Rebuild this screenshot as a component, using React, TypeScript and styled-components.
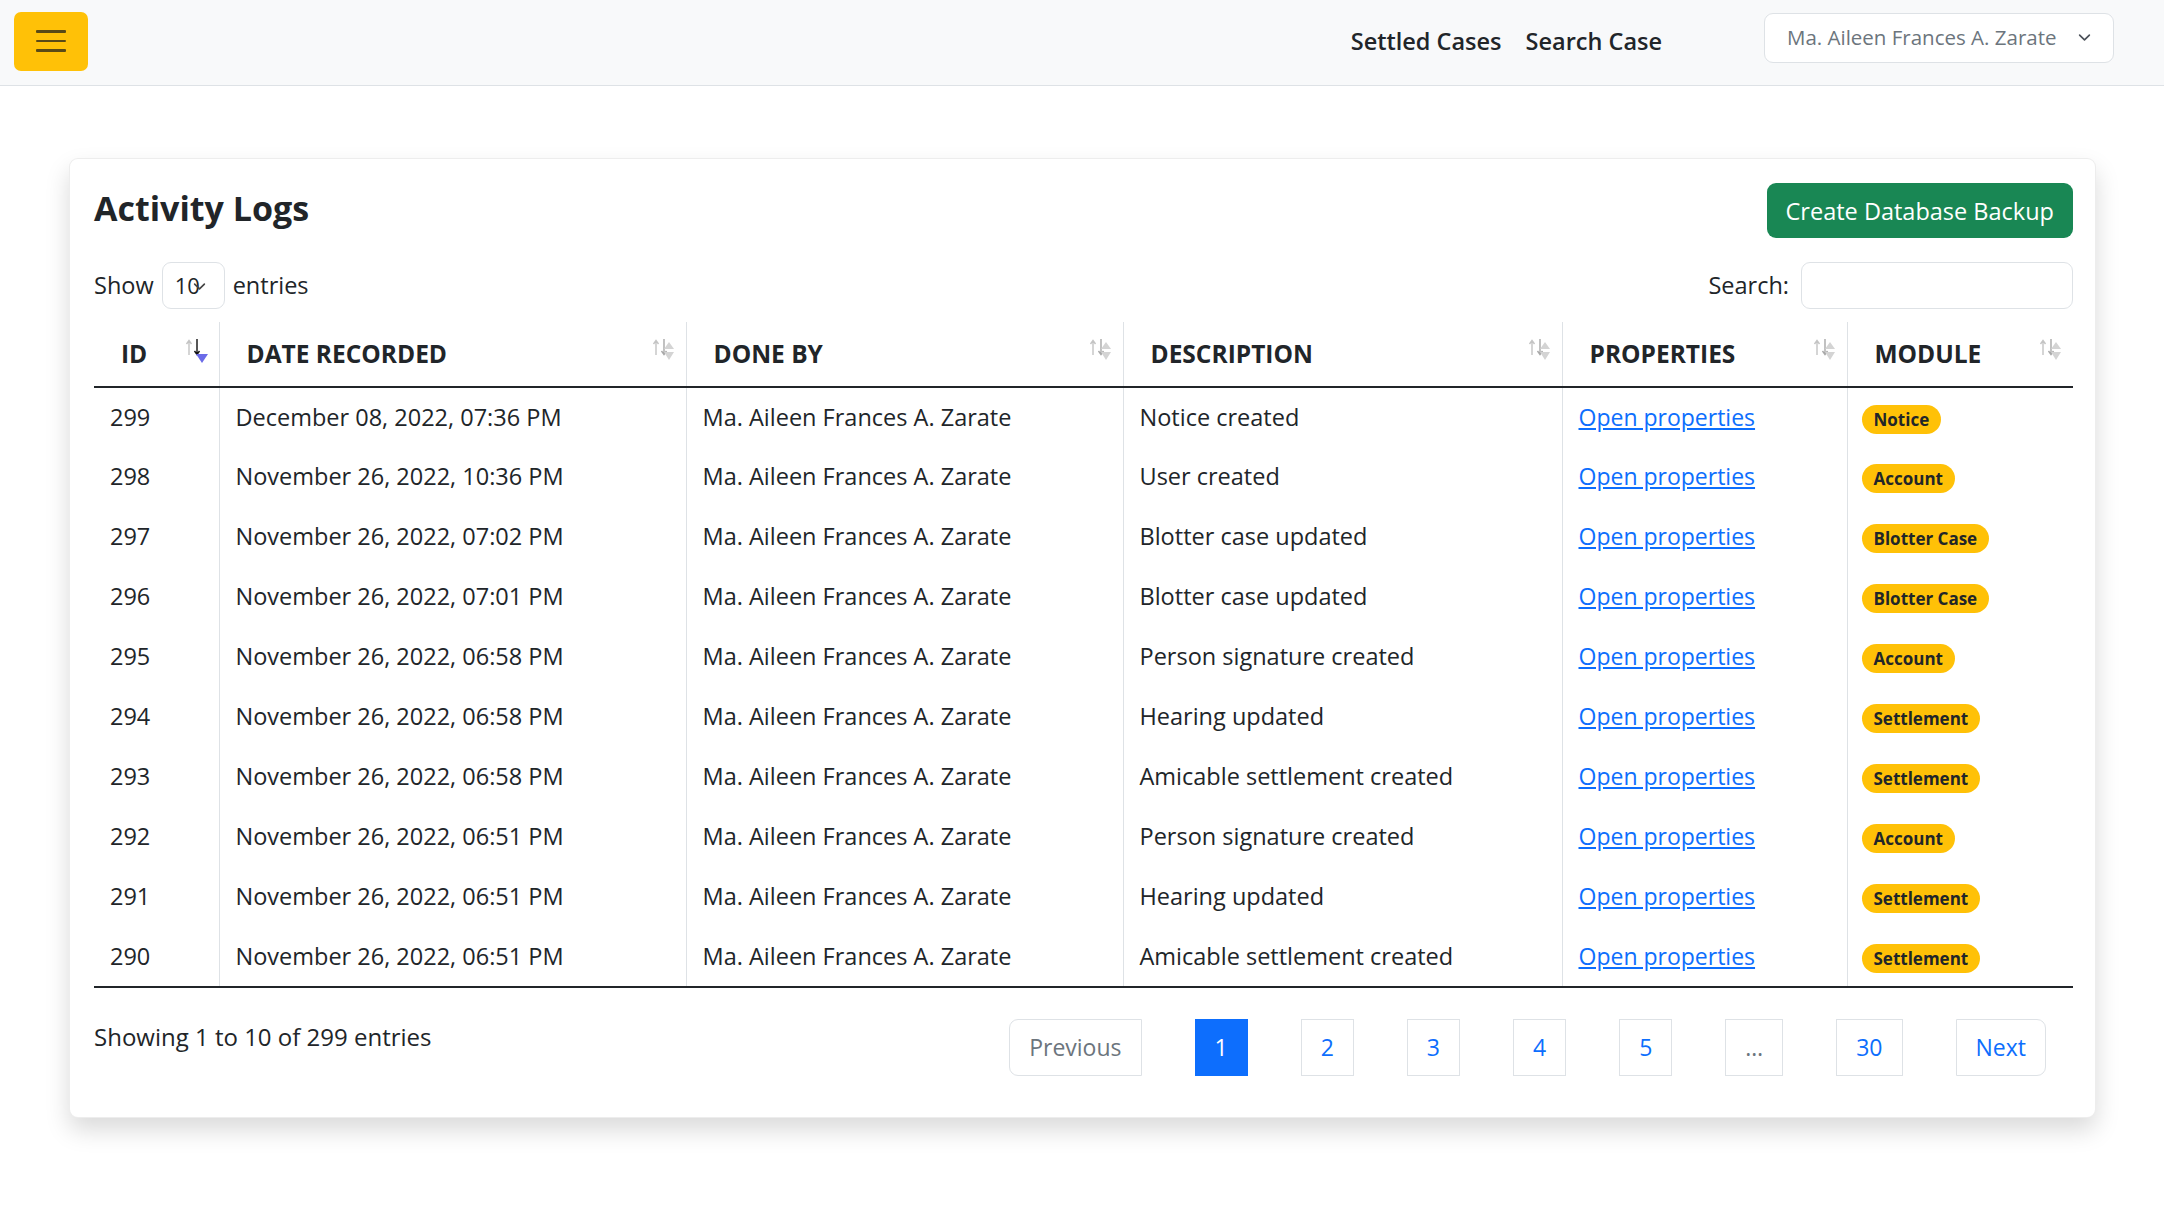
import React from "react";
import styled, { createGlobalStyle } from "styled-components";

const GlobalStyle = createGlobalStyle`
  * { box-sizing: border-box; }
  html, body { margin: 0; padding: 0; background: #ffffff; }
  body {
    font-family: "Open Sans", "Noto Sans", "Liberation Sans", sans-serif;
    color: #212529;
    font-size: 24px;
    line-height: 1.5;
  }
`;

const Navbar = styled.nav`
  display: flex;
  align-items: center;
  height: 86px;
  padding: 0 50px 0 14px;
  background: #f8f9fa;
  border-bottom: 1px solid #dee2e6;
`;

const Toggler = styled.button`
  width: 74px;
  height: 59px;
  margin-top: -3px;
  border: none;
  border-radius: 7px;
  background: #ffc107;
  display: flex;
  flex-direction: column;
  align-items: center;
  justify-content: center;
  gap: 7px;
  padding: 0;
`;

const ToggleBar = styled.span`
  display: block;
  width: 30px;
  height: 2.5px;
  border-radius: 1px;
  background: #5a4a16;
`;

const NavLinks = styled.div`
  margin-left: auto;
  display: flex;
  gap: 24px;
  margin-top: -2px;
`;

const NavLink = styled.a`
  font-size: 23.5px;
  font-weight: 600;
  color: #212529;
  text-decoration: none;
`;

const UserSelect = styled.div`
  margin-left: 102px;
  width: 350px;
  height: 50px;
  margin-top: -10px;
  display: flex;
  align-items: center;
  justify-content: space-between;
  padding: 0 22px 0 22px;
  background: #ffffff;
  border: 1px solid #dee2e6;
  border-radius: 9px;
  color: #6c757d;
  font-size: 20.5px;
`;

const Main = styled.main`
  padding: 72px 68px 40px 69px;
`;

const Card = styled.section`
  background: #ffffff;
  border: 1px solid rgba(0, 0, 0, 0.07);
  border-radius: 9px;
  box-shadow: 0 12px 24px rgba(0, 0, 0, 0.15);
  padding: 24px 22px 41px 24px;
`;

const CardHeader = styled.div`
  display: flex;
  justify-content: space-between;
  align-items: center;
  height: 55px;
`;

const Title = styled.h3`
  margin: -5px 0 0;
  font-size: 34px;
  font-weight: 700;
  line-height: 1.2;
`;

const BackupButton = styled.button`
  height: 55px;
  padding: 0 19px;
  border: none;
  border-radius: 9px;
  background: #198754;
  color: #ffffff;
  font-family: inherit;
  font-size: 23.5px;
`;

const Controls = styled.div`
  margin-top: 25px;
  height: 47px;
  display: flex;
  justify-content: space-between;
  align-items: center;
`;

const ControlGroup = styled.label`
  display: flex;
  align-items: center;
  gap: 8px;
  font-size: 23.5px;
  margin-top: -2px;
`;

const LengthSelect = styled.div`
  width: 63px;
  height: 47px;
  border: 1px solid #dee2e6;
  border-radius: 9px;
  display: flex;
  align-items: center;
  padding-left: 12px;
  font-size: 22px;
`;

const ChevronSlot = styled.span`
  display: flex;
  margin-left: -7px;
  margin-top: 2px;
`;

const SearchInput = styled.input`
  width: 272px;
  height: 47px;
  border: 1px solid #dee2e6;
  border-radius: 9px;
  margin-left: 4px;
`;

const Table = styled.table`
  margin-top: 12px;
  width: 100%;
  border-collapse: collapse;
  table-layout: fixed;
`;

const Th = styled.th`
  position: relative;
  height: 65px;
  padding: 0 27px;
  text-align: left;
  font-size: 24.5px;
  font-weight: 700;
  border-bottom: 2px solid #212529;
  & + & { border-left: 1px solid #dee2e6; }
`;

const SortIcon = styled.svg`
  position: absolute;
  right: 8px;
  top: 13px;
`;

const Tr = styled.tr`
  &:last-child td { border-bottom: 2px solid #212529; }
`;

const Td = styled.td`
  height: 60px;
  padding: 0 16px;
  font-size: 23.5px;
  white-space: nowrap;
  & + & { border-left: 1px solid #dee2e6; }
`;

const PropLink = styled.a`
  color: #0d6efd;
  text-decoration: underline;
  font-size: 23px;
`;

const Badge = styled.span`
  display: inline-block;
  padding: 6px 12px;
  border-radius: 50rem;
  background: #ffc107;
  color: #212529;
  font-size: 17px;
  font-weight: 700;
  line-height: 1;
  margin-left: -2px;
`;

const Footer = styled.div`
  display: flex;
  justify-content: space-between;
  align-items: flex-start;
  padding-top: 31px;
`;

const Info = styled.div`
  font-size: 24px;
`;

const Pagination = styled.ul`
  list-style: none;
  margin: 0 27px 0 0;
  padding: 0;
  display: flex;
  gap: 53px;
`;

const PageItem = styled.li<{ $active?: boolean; $muted?: boolean; $edge?: "left" | "right" }>`
  height: 57px;
  padding: 0 19px;
  display: flex;
  align-items: center;
  font-size: 23px;
  border: 1px solid ${(p) => (p.$active ? "#0d6efd" : "#dee2e6")};
  background: ${(p) => (p.$active ? "#0d6efd" : "#ffffff")};
  color: ${(p) => (p.$active ? "#ffffff" : p.$muted ? "#6c757d" : "#0d6efd")};
  border-radius: ${(p) =>
    p.$edge === "left" ? "9px 0 0 9px" : p.$edge === "right" ? "0 9px 9px 0" : "0"};
`;

const Sort: React.FC<{ active?: boolean }> = ({ active }) => (
  <SortIcon width="26" height="32" viewBox="0 0 26 32">
    <path d="M4 20 V6 M1.5 9 L4 5.5 L6.5 9" stroke="#c4c4c4" strokeWidth="1.4" fill="none" />
    <path
      d="M12 4 V19 M9.5 16 L12 19.5 L14.5 16"
      stroke={active ? "#111" : "#a8a8a8"}
      strokeWidth="1.4"
      fill="none"
    />
    {active ? (
      <path d="M11 19 L23 19 L17 28 Z" fill="#6b6be8" />
    ) : (
      <>
        <path d="M12 14 L22 14 L17 7 Z" fill="#d4d4d4" />
        <path d="M12 17 L22 17 L17 25 Z" fill="#d4d4d4" />
      </>
    )}
  </SortIcon>
);

const Chevron: React.FC<{ size?: number; color?: string }> = ({ size = 14, color = "#343a40" }) => (
  <svg width={size} height={size} viewBox="0 0 16 16">
    <path d="M2 5 L8 11 L14 5" stroke={color} strokeWidth="2" fill="none" strokeLinecap="round" strokeLinejoin="round" />
  </svg>
);

const rows = [
  ["299", "December 08, 2022, 07:36 PM", "Notice created", "Notice"],
  ["298", "November 26, 2022, 10:36 PM", "User created", "Account"],
  ["297", "November 26, 2022, 07:02 PM", "Blotter case updated", "Blotter Case"],
  ["296", "November 26, 2022, 07:01 PM", "Blotter case updated", "Blotter Case"],
  ["295", "November 26, 2022, 06:58 PM", "Person signature created", "Account"],
  ["294", "November 26, 2022, 06:58 PM", "Hearing updated", "Settlement"],
  ["293", "November 26, 2022, 06:58 PM", "Amicable settlement created", "Settlement"],
  ["292", "November 26, 2022, 06:51 PM", "Person signature created", "Account"],
  ["291", "November 26, 2022, 06:51 PM", "Hearing updated", "Settlement"],
  ["290", "November 26, 2022, 06:51 PM", "Amicable settlement created", "Settlement"],
];

const columns = [
  { label: "ID", width: 125 },
  { label: "DATE RECORDED", width: 467 },
  { label: "DONE BY", width: 437 },
  { label: "DESCRIPTION", width: 439 },
  { label: "PROPERTIES", width: 285 },
  { label: "MODULE", width: 226 },
];

export default function App() {
  return (
    <>
      <GlobalStyle />
      <Navbar>
        <Toggler aria-label="menu">
          <ToggleBar />
          <ToggleBar />
          <ToggleBar />
        </Toggler>
        <NavLinks>
          <NavLink>Settled Cases</NavLink>
          <NavLink>Search Case</NavLink>
        </NavLinks>
        <UserSelect>
          <span>Ma. Aileen Frances A. Zarate</span>
          <Chevron size={13} color="#4a5058" />
        </UserSelect>
      </Navbar>
      <Main>
        <Card>
          <CardHeader>
            <Title>Activity Logs</Title>
            <BackupButton>Create Database Backup</BackupButton>
          </CardHeader>
          <Controls>
            <ControlGroup>
              Show
              <LengthSelect>
                10
                <ChevronSlot>
                  <Chevron size={13} color="#444" />
                </ChevronSlot>
              </LengthSelect>
              entries
            </ControlGroup>
            <ControlGroup>
              Search:
              <SearchInput />
            </ControlGroup>
          </Controls>
          <Table>
            <colgroup>
              {columns.map((c) => (
                <col key={c.label} style={{ width: c.width }} />
              ))}
            </colgroup>
            <thead>
              <tr>
                {columns.map((c, i) => (
                  <Th key={c.label}>
                    {c.label}
                    <Sort active={i === 0} />
                  </Th>
                ))}
              </tr>
            </thead>
            <tbody>
              {rows.map((r) => (
                <Tr key={r[0]}>
                  <Td>{r[0]}</Td>
                  <Td>{r[1]}</Td>
                  <Td>Ma. Aileen Frances A. Zarate</Td>
                  <Td>{r[2]}</Td>
                  <Td>
                    <PropLink href="#">Open properties</PropLink>
                  </Td>
                  <Td>
                    <Badge>{r[3]}</Badge>
                  </Td>
                </Tr>
              ))}
            </tbody>
          </Table>
          <Footer>
            <Info>Showing 1 to 10 of 299 entries</Info>
            <Pagination>
              <PageItem $muted $edge="left">Previous</PageItem>
              <PageItem $active>1</PageItem>
              <PageItem>2</PageItem>
              <PageItem>3</PageItem>
              <PageItem>4</PageItem>
              <PageItem>5</PageItem>
              <PageItem $muted>…</PageItem>
              <PageItem>30</PageItem>
              <PageItem $edge="right">Next</PageItem>
            </Pagination>
          </Footer>
        </Card>
      </Main>
    </>
  );
}
